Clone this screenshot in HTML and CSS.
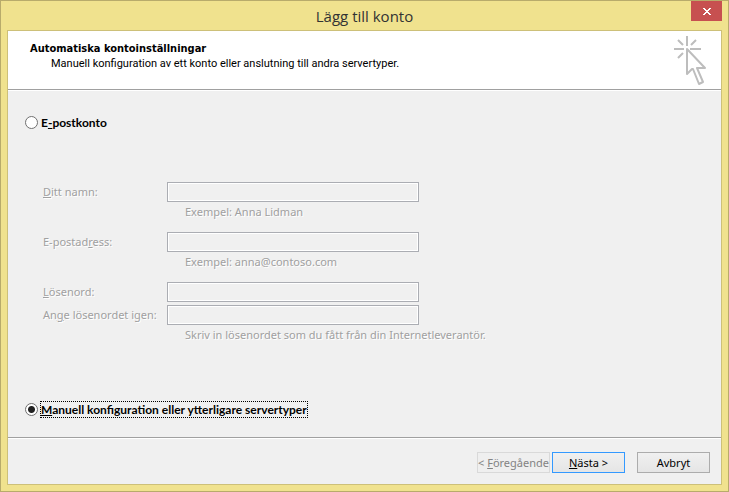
FILE: index.html
```html
<!DOCTYPE html>
<html lang="sv">

<head>
    <meta charset="UTF-8">
    <title>Lägg till konto</title>
    <link rel="stylesheet" href="styles.css">
</head>

<body>
    <div class="window">
        <div class="titlebar">
            <h1 class="title">Lägg till konto</h1>
            <button type="button" class="close" aria-label="Stäng">
                <svg width="8" height="7" viewBox="0 0 8 7" shape-rendering="crispEdges">
                    <path fill="#fff" d="M0 0h2v1H0zM6 0h2v1H6zM1 1h2v1H1zM5 1h2v1H5zM2 2h4v1H2zM3 3h2v1H3zM2 4h4v1H2zM1 5h2v1H1zM5 5h2v1H5zM0 6h2v1H0zM6 6h2v1H6z" />
                </svg>
            </button>
        </div>
        <form class="client">
            <div class="header">
                <div class="header-text">
                    <h2 class="heading">Automatiska kontoinställningar</h2>
                    <p class="subheading">Manuell konfiguration av ett konto eller anslutning till andra servertyper.</p>
                </div>
                <svg class="wizard-icon" width="34" height="50" viewBox="0 0 34 50" fill="none" stroke="#bdbdbd" stroke-width="2">
                    <path d="M14 0v10M1 13h10M17 13h11M5 4l5 5M23 4l-5 5M5 22l5-5" />
                    <path d="M14 13v25l5-5h1l6 15 4-2-6-14h8z" stroke-linejoin="round" />
                </svg>
            </div>
            <div class="content">
                <div class="choice">
                    <input type="radio" name="type" id="email">
                    <label for="email">E<u>-</u>postkonto</label>
                </div>
                <div class="fields">
                    <label for="name"><u>D</u>itt namn:</label>
                    <input type="text" id="name" disabled>
                    <p class="hint">Exempel: Anna Lidman</p>

                    <label for="address">E-postad<u>r</u>ess:</label>
                    <input type="text" id="address" disabled>
                    <p class="hint">Exempel: anna@contoso.com</p>

                    <label for="password"><u>L</u>ösenord:</label>
                    <input type="password" id="password" class="tight" disabled>

                    <label for="repeat">An<u>g</u>e lösenordet igen:</label>
                    <input type="password" id="repeat" disabled>
                    <p class="hint">Skriv in lösenordet som du fått från din Internetleverantör.</p>
                </div>
                <div class="choice">
                    <input type="radio" name="type" id="manual" checked>
                    <label for="manual" class="focused"><u>M</u>anuell konfiguration eller ytterligare servertyper</label>
                </div>
            </div>
            <div class="footer">
                <button type="button" class="btn" disabled>&lt; <u>F</u>öregående</button>
                <button type="button" class="btn primary"><u>N</u>ästa &gt;</button>
                <button type="button" class="btn cancel">Avbryt</button>
            </div>
        </form>
    </div>
</body>

</html>
```
FILE: styles.css
```css
* {
    box-sizing: border-box;
}

body {
    margin: 0;
    font-family: "Noto Sans", "Open Sans", sans-serif;
    font-size: 11px;
    line-height: 15px;
    color: #000;
}

h1,
h2,
p {
    margin: 0;
}

.window {
    display: flex;
    flex-direction: column;
    min-height: 100vh;
    padding: 0 6px 6px;
    background: #f0e28e;
    border: 1px solid #b8ab6b;
}

/* title bar */
.titlebar {
    display: grid;
    grid-template-columns: 31px 1fr 31px;
    height: 29px;
}

.title {
    grid-column: 2;
    align-self: center;
    font-family: "Open Sans", sans-serif;
    font-size: 15px;
    font-weight: normal;
    line-height: 20px;
    text-align: center;
    color: #333;
}

.close {
    display: flex;
    align-items: center;
    justify-content: center;
    height: 20px;
    padding: 0;
    border: 0;
    background: #c75050;
}

.client {
    display: flex;
    flex: 1;
    flex-direction: column;
    background: #f0f0f0;
    border: 1px solid #cdc079;
}

/* wizard header */
.header {
    display: flex;
    justify-content: space-between;
    height: 59px;
    padding: 5px 14px 0 22px;
    background: #fff;
    border-bottom: 1px solid #a0a0a0;
    box-shadow: 0 1px #fff;
}

.header-text {
    padding-top: 5px;
}

.heading {
    font-family: "DejaVu Sans Condensed", "DejaVu Sans", sans-serif;
    font-size: 11px;
    font-weight: bold;
    line-height: 15px;
}

.subheading {
    padding-left: 21px;
    font-family: Roboto, sans-serif;
}

.content {
    flex: 1;
    padding: 24px 17px 18px;
}

.choice {
    display: flex;
    align-items: center;
    gap: 3px;
    height: 16px;
    font-family: Lato, sans-serif;
    font-weight: bold;
}

.choice input {
    appearance: none;
    width: 13px;
    height: 13px;
    margin: 0;
    border: 1px solid #707070;
    border-radius: 50%;
    background: #fff;
}

.choice input:checked {
    background: radial-gradient(circle, #222 3px, #fff 4px);
}

.choice label {
    font-size: 12px;
}

.focused {
    outline: 1px dotted #000;
}

/* account fields */
.fields {
    display: grid;
    grid-template-columns: 124px minmax(0, 252px) 1fr;
    padding: 52px 18px 46px;
    line-height: 20px;
    color: #a0a0a0;
    text-shadow: 1px 1px #fff;
}

.fields label {
    grid-column: 1;
}

.fields input {
    height: 20px;
    padding: 0 4px;
    font: inherit;
    background: #f0f0f0;
    border: 1px solid #abadb3;
    box-shadow: inset 0 0 0 1px #fff;
}

.fields .tight {
    margin-bottom: 3px;
}

.hint {
    grid-column: 2 / 4;
    padding-left: 18px;
    margin-bottom: 10px;
}

/* buttons */
.footer {
    display: flex;
    justify-content: flex-end;
    gap: 2px;
    padding: 14px 11px 11px;
    border-top: 1px solid #a0a0a0;
    box-shadow: inset 0 1px #fff;
}

.btn {
    width: 73px;
    height: 21px;
    padding: 0;
    font: inherit;
    color: #000;
    white-space: nowrap;
    overflow: hidden;
    background: linear-gradient(#f0f0f0, #e5e5e5);
    border: 1px solid #acacac;
}

.btn:disabled {
    color: #838383;
    background: #efefef;
    border-color: #d9d9d9;
}

.primary {
    border-color: #3399ff;
}

.cancel {
    margin-left: 10px;
}
```
